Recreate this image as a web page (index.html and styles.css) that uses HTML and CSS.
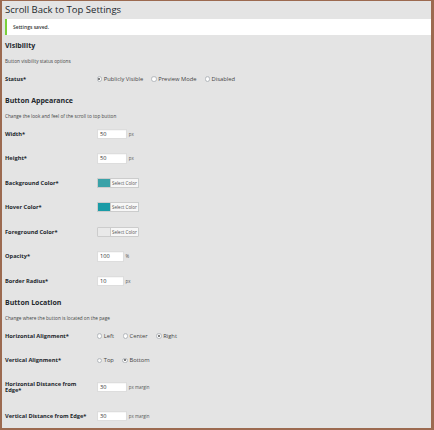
FILE: index.html
```html
<!DOCTYPE html>
<html>
<head>
<meta charset="utf-8">
<link rel="stylesheet" href="styles.css">
</head>
<body>
<div class="frame">
  <h1 class="title">Scroll Back to Top Settings</h1>
  <div class="notice"><p>Settings saved.</p></div>

  <h2 class="section vis">Visibility</h2>
  <p class="desc">Button visibility status options</p>
  <div class="row first">
    <div class="label">Status*</div>
    <div class="field radios">
      <label class="radio"><span class="dot on"></span>Publicly Visible</label>
      <label class="radio"><span class="dot"></span>Preview Mode</label>
      <label class="radio"><span class="dot"></span>Disabled</label>
    </div>
  </div>

  <h2 class="section">Button Appearance</h2>
  <p class="desc">Change the look and feel of the scroll to top button</p>
  <div class="rows">
    <div class="row"><div class="label">Width*</div><div class="field"><span class="input">50</span><span class="unit">px</span></div></div>
    <div class="row"><div class="label">Height*</div><div class="field"><span class="input">50</span><span class="unit">px</span></div></div>
    <div class="row"><div class="label">Background Color*</div><div class="field"><span class="picker bg"><span class="pick-text">Select Color</span></span></div></div>
    <div class="row"><div class="label">Hover Color*</div><div class="field"><span class="picker hover"><span class="pick-text">Select Color</span></span></div></div>
    <div class="row"><div class="label">Foreground Color*</div><div class="field"><span class="picker fg"><span class="pick-text">Select Color</span></span></div></div>
    <div class="row"><div class="label">Opacity*</div><div class="field"><span class="input small">100</span><span class="unit">%</span></div></div>
    <div class="row"><div class="label">Border Radius*</div><div class="field"><span class="input small">10</span><span class="unit">px</span></div></div>
  </div>

  <h2 class="section">Button Location</h2>
  <p class="desc">Change where the button is located on the page</p>
  <div class="rows">
    <div class="row">
      <div class="label">Horizontal Alignment*</div>
      <div class="field radios wide">
        <label class="radio"><span class="dot"></span>Left</label>
        <label class="radio"><span class="dot"></span>Center</label>
        <label class="radio"><span class="dot on"></span>Right</label>
      </div>
    </div>
    <div class="row">
      <div class="label">Vertical Alignment*</div>
      <div class="field radios wide">
        <label class="radio"><span class="dot"></span>Top</label>
        <label class="radio"><span class="dot on"></span>Bottom</label>
      </div>
    </div>
    <div class="row tall"><div class="label two">Horizontal Distance from Edge*</div><div class="field"><span class="input">30</span><span class="unit">px margin</span></div></div>
    <div class="row tall"><div class="label">Vertical Distance from Edge*</div><div class="field"><span class="input">30</span><span class="unit">px margin</span></div></div>
  </div>
</div>
</body>
</html>
```

FILE: styles.css
```css
* { box-sizing: border-box; }
html, body { margin: 0; padding: 0; }
body {
  font-family: "Open Sans", "Liberation Sans", sans-serif;
  color: #444;
  background: #e4e4e4;
}
.frame {
  width: 434px;
  height: 430px;
  overflow: hidden;
  background: #e4e4e4;
  border-style: solid;
  border-color: #9c6a50;
  border-width: 1px 3px 2px 2px;
  padding-left: 3px;
}
.title {
  margin: 2px 0 0;
  font-size: 9.5px;
  line-height: 14px;
  font-weight: 400;
  color: #23282d;
}
.notice {
  margin-top: 2px;
  height: 16px;
  background: #fff;
  border-left: 2px solid #7ad03a;
  display: flex;
  align-items: center;
  padding-left: 6px;
}
.notice p {
  margin: 0;
  font-size: 5px;
  font-weight: 600;
  color: #333;
}
.section {
  margin: 5px 0 0;
  font-size: 7px;
  line-height: 10px;
  font-weight: 700;
  color: #23282d;
}
.section.vis { margin-top: 6px; }
.desc {
  margin: 6px 0 0;
  font-size: 4.7px;
  line-height: 8px;
  color: #444;
}
.row {
  display: flex;
  align-items: center;
  height: 24.5px;
}
.row.first { margin-top: 2px; height: 24px; }
.rows { margin-top: 1.6px; }
.row.tall { height: 28.8px; }
.label {
  width: 91.7px;
  flex: none;
  padding-right: 5px;
  font-size: 5.7px;
  font-weight: 700;
  color: #23282d;
}
.label.two { line-height: 6.3px; }
.field {
  display: flex;
  align-items: center;
  font-size: 5.8px;
  color: #444;
}
.radios { gap: 8px; }
.radios.wide { gap: 8.5px; }
.radio {
  display: flex;
  align-items: center;
  gap: 1.5px;
}
.dot {
  width: 5.5px;
  height: 5.5px;
  border-radius: 50%;
  background: #fff;
  border: 0.6px solid #b4b9be;
  box-shadow: inset 0 0.5px 1px rgba(0,0,0,0.1);
  display: flex;
  align-items: center;
  justify-content: center;
}
.dot.on::after {
  content: "";
  width: 2px;
  height: 2px;
  border-radius: 50%;
  background: #555;
}
.input {
  width: 30.6px;
  height: 10.7px;
  background: #fff;
  border: 0.6px solid #ddd;
  box-shadow: inset 0 0.5px 1px rgba(0,0,0,0.07);
  font-size: 5.6px;
  color: #333;
  padding-left: 2.4px;
  display: flex;
  align-items: center;
}
.input.small { width: 27.3px; }
.unit {
  margin-left: 1.5px;
  font-size: 4.4px;
  color: #555;
}
.picker {
  display: flex;
  width: 42px;
  height: 10px;
  border: 0.6px solid #ccc;
  border-radius: 1px;
  padding-left: 12.4px;
}
.picker.bg { background: #3aa2a8; }
.picker.hover { background: #1a9ba6; }
.picker.fg { background: #e9e9e9; }
.pick-text {
  flex: 1;
  background: #f7f7f7;
  border-left: 0.6px solid #ccc;
  font-size: 4.5px;
  color: #555;
  display: flex;
  align-items: center;
  justify-content: center;
}
```
